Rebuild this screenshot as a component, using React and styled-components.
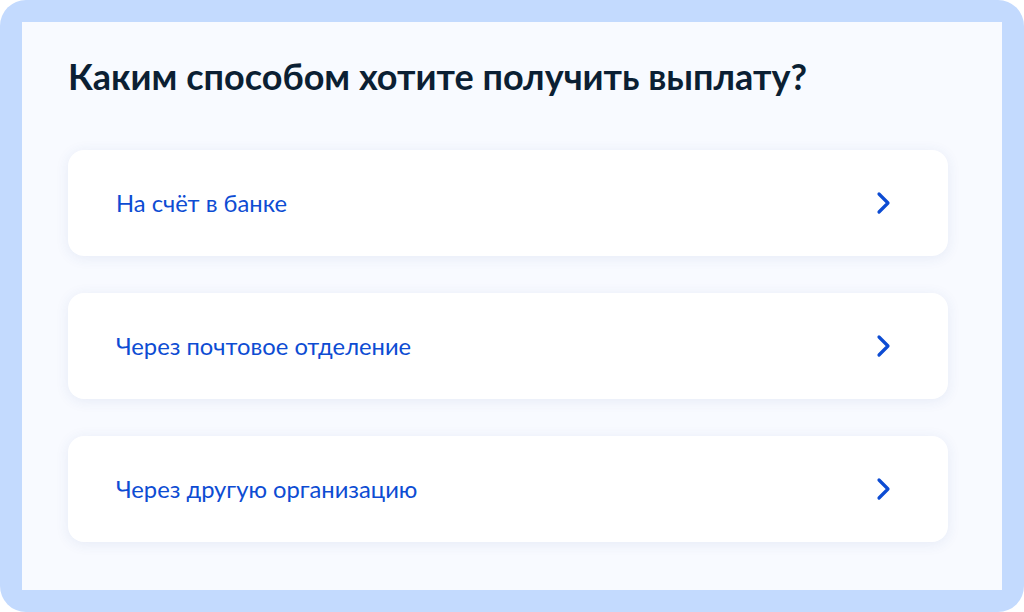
import React from "react";
import styled, { createGlobalStyle } from "styled-components";

const GlobalStyle = createGlobalStyle`
  html, body {
    margin: 0;
    padding: 0;
    background: #ffffff;
  }
  body {
    font-family: Lato, "Noto Sans", sans-serif;
  }
`;

const options = [
  "На счёт в банке",
  "Через почтовое отделение",
  "Через другую организацию",
];

const Chevron = () => (
  <svg width="16" height="24" viewBox="0 0 16 24" fill="none">
    <path
      d="M3 3l9 9-9 9"
      stroke="#0d4cd3"
      strokeWidth="3.2"
      strokeLinecap="round"
      strokeLinejoin="round"
    />
  </svg>
);

const App = () => (
  <>
    <GlobalStyle />
    <Frame>
      <Panel>
        <Title>Каким способом хотите получить выплату?</Title>
        <List>
          {options.map((label) => (
            <Card key={label}>
              <Label>{label}</Label>
              <Chevron />
            </Card>
          ))}
        </List>
      </Panel>
    </Frame>
  </>
);

const Frame = styled.div`
  width: 1024px;
  height: 612px;
  box-sizing: border-box;
  padding: 22px;
  background: #c3dafe;
  border-radius: 26px;
`;

const Panel = styled.div`
  height: 100%;
  box-sizing: border-box;
  padding: 32px 54px 0 46px;
  background: #f8faff;
`;

const Title = styled.h1`
  margin: 0 0 52px;
  font-size: 36px;
  line-height: 44px;
  font-weight: 700;
  color: #0b1f33;
`;

const List = styled.div`
  display: flex;
  flex-direction: column;
  gap: 37px;
`;

const Card = styled.div`
  height: 106px;
  box-sizing: border-box;
  display: flex;
  align-items: center;
  justify-content: space-between;
  padding: 0 56px 0 48px;
  background: #ffffff;
  border-radius: 16px;
  box-shadow: 0 2px 14px rgba(40, 80, 160, 0.09);
`;

const Label = styled.span`
  font-size: 23.75px;
  color: #0d4cd3;
`;

export default App;
